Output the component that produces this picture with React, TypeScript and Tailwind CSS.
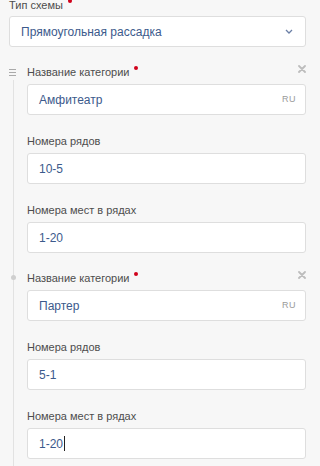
import React from "react";

const font = { fontFamily: '"Liberation Sans", Arial, sans-serif' };

function Label({ text, required }: { text: string; required?: boolean }) {
  return (
    <div className="flex items-start h-[16px] text-[11px] leading-[16px] text-[#4d4d4d]">
      <span>{text}</span>
      {required && <span className="ml-[5px] mt-[2px] w-[4px] h-[4px] rounded-full bg-[#d0021b]" />}
    </div>
  );
}

function Input({ value, ru, caret }: { value: string; ru?: boolean; caret?: boolean }) {
  return (
    <div className="mt-[4px] h-[31px] bg-white border border-[#dedede] rounded-[3px] flex items-center pl-[11px] pr-[9px]">
      <span className="text-[12px] text-[#3c5a8c] flex-1 flex items-center">
        {value}
        {caret && <span className="inline-block w-px h-[15px] bg-[#222] ml-px" />}
      </span>
      {ru && <span className="text-[9px] text-[#9a9a9a] tracking-[0.5px]">RU</span>}
    </div>
  );
}

function Close() {
  return (
    <svg width="8" height="8" viewBox="0 0 8 8" className="absolute right-[14px] top-[1px]">
      <path d="M1 1L7 7M7 1L1 7" stroke="#bdbdbd" strokeWidth="1.8" strokeLinecap="round" />
    </svg>
  );
}

function Group({ title, rows, seats, caret, first }: { title: string; rows: string; seats: string; caret?: boolean; first?: boolean }) {
  return (
    <div className="relative pl-[27px] pr-[14px]">
      {first ? (
        <div className="absolute left-[9px] top-[5px] flex flex-col gap-[2px]">
          <span className="block w-[7px] h-px bg-[#aaaaaa]" />
          <span className="block w-[7px] h-px bg-[#aaaaaa]" />
          <span className="block w-[7px] h-px bg-[#aaaaaa]" />
        </div>
      ) : (
        <span className="absolute left-[11px] top-[5px] w-[5px] h-[5px] rounded-full bg-[#cfcfcf]" />
      )}
      <Close />
      <Label text="Название категории" required />
      <Input value={title} ru />
      <div className="mt-[18px]">
        <Label text="Номера рядов" />
        <Input value={rows} />
      </div>
      <div className="mt-[18px]">
        <Label text="Номера мест в рядах" />
        <Input value={seats} caret={caret} />
      </div>
    </div>
  );
}

export default function App() {
  return (
    <div style={font} className="w-[320px] h-[466px] bg-[#f7f7f7] overflow-hidden relative">
      <div className="px-[9px] pr-[14px] -mt-[3px]">
        <Label text="Тип схемы" required />
        <div className="mt-[3px] h-[31px] bg-white border border-[#dedede] rounded-[3px] flex items-center pl-[11px] pr-[12px]">
          <span className="text-[12px] text-[#3c5a8c] flex-1">Прямоугольная рассадка</span>
          <svg width="8" height="5" viewBox="0 0 8 5">
            <path d="M1 1L4 4L7 1" stroke="#6b7fa6" strokeWidth="1.3" fill="none" />
          </svg>
        </div>
      </div>
      <span className="absolute left-[13px] top-[80px] bottom-0 w-px bg-[#e2e2e2]" />
      <div className="mt-[17px]">
        <Group title="Амфитеатр" rows="10-5" seats="1-20" first />
      </div>
      <div className="mt-[17px]">
        <Group title="Партер" rows="5-1" seats="1-20" caret />
      </div>
    </div>
  );
}
